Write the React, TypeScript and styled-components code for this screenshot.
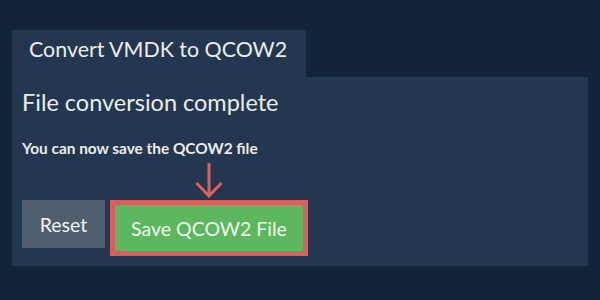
import styled, { createGlobalStyle } from 'styled-components';

const GlobalStyle = createGlobalStyle`
  html, body {
    margin: 0;
    padding: 0;
    background: #13243a;
  }
  body {
    font-family: Lato, "Open Sans", sans-serif;
    color: #ececec;
  }
`;

const App = () => {
  return (
    <Page>
      <GlobalStyle />
      <Tab>Convert VMDK to QCOW2</Tab>
      <Panel>
        <Title>File conversion complete</Title>
        <Message>You can now save the QCOW2 file</Message>
        <ArrowRow>
          <svg width="28" height="36" viewBox="0 0 28 36">
            <path d="M14 1 V34 M1.5 21 L14 34 L26.5 21" stroke="#d9605c" strokeWidth="3" fill="none" />
          </svg>
        </ArrowRow>
        <Buttons>
          <Button variant="reset">Reset</Button>
          <Highlight>
            <Button variant="save">Save QCOW2 File</Button>
          </Highlight>
        </Buttons>
      </Panel>
    </Page>
  );
};

const Page = styled.div`
  width: 600px;
  height: 300px;
  box-sizing: border-box;
  padding: 30px 12px 0;
`;

const Tab = styled.div`
  display: inline-block;
  height: 47px;
  width: 294px;
  box-sizing: border-box;
  padding: 4px 0 0 17px;
  background: #233850;
  font-size: 21.4px;
  line-height: 30px;
`;

const Panel = styled.div`
  background: #233850;
  height: 189px;
  box-sizing: border-box;
  padding: 10px 10px 0;
`;

const Title = styled.div`
  font-size: 23.5px;
  line-height: 30px;
`;

const Message = styled.div`
  margin-top: 22px;
  font-size: 15.4px;
  font-weight: 700;
  line-height: 18px;
`;

const ArrowRow = styled.div`
  height: 38px;
  padding: 5px 0 0 173px;
  svg {
    display: block;
  }
`;

const Buttons = styled.div`
  display: flex;
  align-items: flex-start;
  gap: 5px;
`;

const Highlight = styled.div`
  background: #d9605c;
  padding: 5px;
`;

const Button = styled.button<{ variant: 'reset' | 'save' }>`
  border: none;
  margin: 0;
  font-family: Lato, "Open Sans", sans-serif;
  font-size: 19.5px;
  color: #f4f4f4;
  cursor: pointer;
  height: ${(p) => (p.variant === 'save' ? '46px' : '48px')};
  width: ${(p) => (p.variant === 'save' ? '188px' : '83px')};
  background: ${(p) => (p.variant === 'save' ? '#5cb85c' : '#4e5e6f')};
  padding: 0;
`;

export default App;
